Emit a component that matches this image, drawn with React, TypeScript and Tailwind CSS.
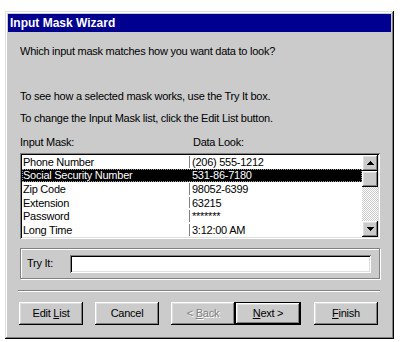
const raised =
  "shadow-[inset_-1px_-1px_#000000,inset_1px_1px_#ffffff,inset_-2px_-2px_#808080,inset_2px_2px_#dfdfdf]";
const sunken =
  "shadow-[inset_1px_1px_#808080,inset_-1px_-1px_#ffffff,inset_2px_2px_#000000,inset_-2px_-2px_#dfdfdf]";

function Arrow({ down }: { down?: boolean }) {
  return (
    <svg width="7" height="4" viewBox="0 0 7 4" shapeRendering="crispEdges">
      {down ? <polygon points="0,0 7,0 3.5,4" fill="#000" /> : <polygon points="3.5,0 7,4 0,4" fill="#000" />}
    </svg>
  );
}

function Btn({
  children,
  disabled,
  isDefault,
  className = "",
}: {
  children: React.ReactNode;
  disabled?: boolean;
  isDefault?: boolean;
  className?: string;
}) {
  const inner = (
    <div
      className={`h-full w-full flex items-center justify-center bg-[#cbcbcb] ${raised} ${
        disabled ? "text-[#808080] [text-shadow:1px_1px_0_#ffffff]" : "text-black"
      }`}
    >
      <span className="whitespace-pre">{children}</span>
    </div>
  );
  if (isDefault) {
    return <div className={`h-[23px] border border-black ${className}`}>{inner}</div>;
  }
  return <div className={`h-[23px] ${className}`}>{inner}</div>;
}

export default function App() {
  const rows: [string, string][] = [
    ["Phone Number", "(206) 555-1212"],
    ["Social Security Number", "531-86-7180"],
    ["Zip Code", "98052-6399"],
    ["Extension", "63215"],
    ["Password", "*******"],
    ["Long Time", "3:12:00 AM"],
  ];
  return (
    <div className="w-[400px] h-[342px] bg-white pt-[11px] pl-[5px] font-['Liberation_Sans',Arial,sans-serif] text-[11px] tracking-[-0.25px] text-black">
      <div
        className={`w-[389px] h-[328px] bg-[#cbcbcb] p-[3px] flex flex-col shadow-[inset_-1px_-1px_#000000,inset_1px_1px_#dfdfdf,inset_-2px_-2px_#808080,inset_2px_2px_#ffffff]`}
      >
        <div className="h-[18px] bg-[#000090] text-white font-bold text-[12px] tracking-normal pl-[2px] flex items-center leading-none">
          Input Mask Wizard
        </div>
        <div className="flex flex-col pl-[12px] pr-[11px]">
          <p className="mt-[13px] leading-[13px]">Which input mask matches how you want data to look?</p>
          <p className="mt-[32px] leading-[13px]">To see how a selected mask works, use the Try It box.</p>
          <p className="mt-[9px] leading-[13px]">To change the Input Mask list, click the Edit List button.</p>
          <div className="mt-[11px] leading-[13px] flex">
            <span className="w-[173px]">Input Mask:</span>
            <span>Data Look:</span>
          </div>
          <div className={`mt-[4px] h-[86px] w-[360px] bg-white p-[2px] flex ${sunken}`}>
            <div className="flex-1 flex flex-col overflow-hidden">
              {rows.map(([a, b], i) => {
                const sel = i === 1;
                return (
                  <div
                    key={a}
                    className={`h-[13.6px] shrink-0 flex items-center leading-[12px] ${
                      sel ? "bg-black text-white border border-dotted border-[#9a9a9a]" : "border border-transparent"
                    }`}
                  >
                    <span className="w-[166px] whitespace-nowrap">{a}</span>
                    <span className={`w-px self-stretch ${sel ? "bg-black" : "bg-[#808080]"}`} />
                    <span className="pl-[2px] whitespace-nowrap">{b}</span>
                  </div>
                );
              })}
            </div>
            <div className="w-[16px] flex flex-col">
              <div className={`h-[16px] bg-[#cbcbcb] flex items-center justify-center ${raised}`}>
                <Arrow />
              </div>
              <div className={`h-[16px] bg-[#cbcbcb] ${raised}`} />
              <div className="flex-1 bg-[repeating-conic-gradient(#cbcbcb_0%_25%,#ffffff_0%_50%)] bg-[length:2px_2px]" />
              <div className={`h-[16px] bg-[#cbcbcb] flex items-center justify-center ${raised}`}>
                <Arrow down />
              </div>
            </div>
          </div>
          <div className="mt-[9px] h-[31px] w-[360px] border border-[#808080] shadow-[inset_1px_1px_#ffffff,1px_1px_#ffffff] flex items-center pl-[6px] pr-[8px]">
            <span className="w-[43px]">Try It:</span>
            <div className={`flex-1 h-[18px] bg-white ${sunken}`} />
          </div>
          <div className="mt-[11px] h-[2px] w-[362px] -ml-[2px] border-t border-[#808080] border-b border-b-white" />
          <div className="mt-[10px] flex -ml-[1px]">
            <Btn className="w-[64px]">
              Edit <u className="underline-offset-1">L</u>ist
            </Btn>
            <Btn className="w-[64px] ml-[12px]">Cancel</Btn>
            <Btn className="w-[64px] ml-[12px]" disabled>
              &lt; <u className="underline-offset-1">B</u>ack
            </Btn>
            <Btn className="w-[66px]" isDefault>
              <u className="underline-offset-1">N</u>ext &gt;
            </Btn>
            <Btn className="w-[64px] ml-[13px]">
              <u className="underline-offset-1">F</u>inish
            </Btn>
          </div>
        </div>
      </div>
    </div>
  );
}
